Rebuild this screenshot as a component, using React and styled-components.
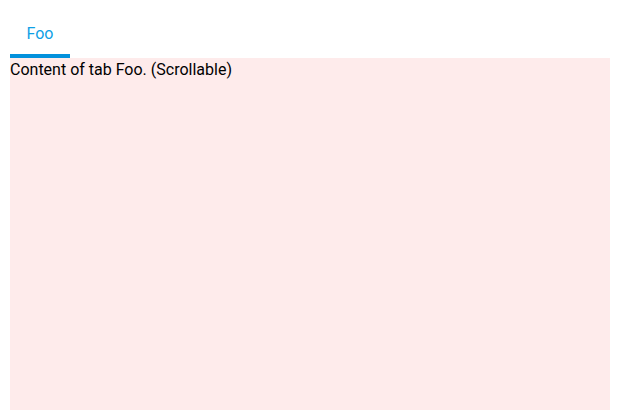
import React, { useState } from 'react'
import styled, { createGlobalStyle } from 'styled-components'

const Global = createGlobalStyle`
  html, body {
    margin: 0;
    background: #ffffff;
    font-family: Roboto, "Noto Sans", sans-serif;
  }
  #root {
    padding: 10px;
    height: 420px;
    box-sizing: border-box;
  }
`

const Frame = styled.div`
  display: flex;
  flex-direction: column;
  height: 400px;
`

const TabBar = styled.div`
  display: flex;
  height: 48px;
  flex-shrink: 0;
`

const Tab = styled.button`
  display: flex;
  align-items: center;
  justify-content: center;
  min-width: 60px;
  padding: 2px 16px 0;
  border: none;
  border-bottom: 4px solid ${p => (p.active ? '#0391dc' : 'transparent')};
  box-sizing: border-box;
  background: transparent;
  color: ${p => (p.active ? '#0fa0e6' : '#666')};
  font-family: Roboto, sans-serif;
  font-size: 16px;
  cursor: pointer;
`

const Panel = styled.div`
  flex: 1;
  overflow: auto;
  background: #feebeb;
  color: #000;
  font-size: 16px;
  line-height: 19px;
  padding-top: 2px;
`

const tabs = [{ id: 'foo', label: 'Foo', body: 'Content of tab Foo. (Scrollable)' }]

export default function App() {
  const [current, setCurrent] = useState('foo')
  const tab = tabs.find(t => t.id === current)
  return (
    <>
      <Global />
      <Frame>
        <TabBar>
          {tabs.map(t => (
            <Tab key={t.id} active={t.id === current} onClick={() => setCurrent(t.id)}>
              {t.label}
            </Tab>
          ))}
        </TabBar>
        <Panel>{tab.body}</Panel>
      </Frame>
    </>
  )
}
